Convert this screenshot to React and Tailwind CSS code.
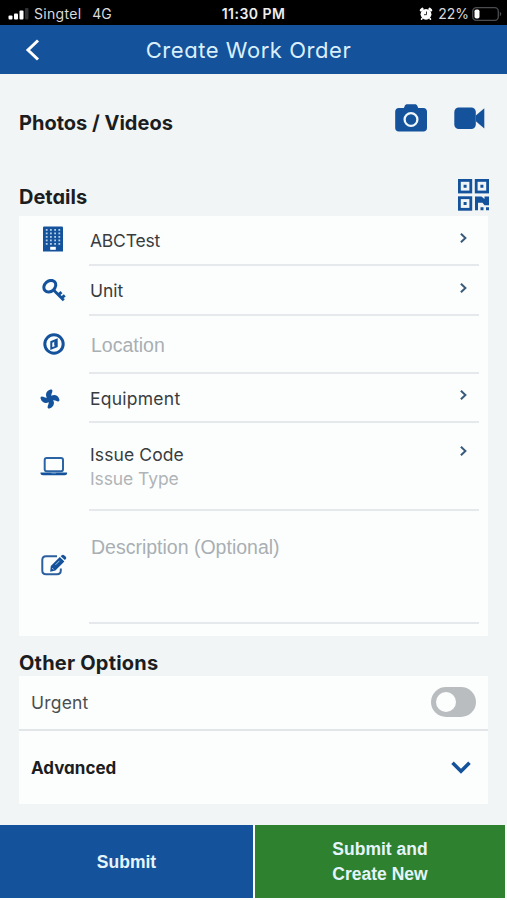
import { useState } from 'react';

const SignalIcon = () => (
  <svg width="22" height="12" viewBox="0 0 22 12" fill="#fff">
    <rect x="0.5" y="7.5" width="4" height="4" rx="1" />
    <rect x="6" y="5.5" width="4" height="6" rx="1" />
    <rect x="11.5" y="2.5" width="4" height="9" rx="1" />
    <rect x="17" y="0" width="3.5" height="11.5" rx="1" fill="#303236" />
  </svg>
);

const AlarmIcon = () => (
  <svg width="14" height="14" viewBox="0 0 14 14">
    <path d="M2 3.200 3.400 2M12 3.200 10.600 2" stroke="#fff" strokeWidth="2.600" strokeLinecap="round" />
    <path d="m3 11.500-.5.700M11 11.500l.5.700" stroke="#fff" strokeWidth="1.600" strokeLinecap="round" />
    <circle cx="7" cy="7.300" r="5.400" fill="#fff" />
    <path d="M7.500 4.500v3.200H5" stroke="#333" strokeWidth="1" fill="none" />
  </svg>
);

const BatteryIcon = () => (
  <svg width="30" height="14" viewBox="0 0 30 14">
    <rect x="0.7" y="0.7" width="25.6" height="12.6" rx="3.6" fill="none" stroke="#4a4c50" strokeWidth="1.3" />
    <rect x="2.5" y="2.5" width="5" height="9" rx="1.8" fill="#fff" />
    <path d="M27.8 4.8c2 .8 2 3.6 0 4.4z" fill="#4a4c50" />
  </svg>
);

const CameraIcon = () => (
  <svg width="32" height="28" viewBox="0 0 32 28">
    <path d="M9.600 2.200C10.200.8 11 .3 12.500.3h7.200c1.400 0 2.200.5 2.800 1.900l.7 1.800h5.200c2.200 0 3.600 1.500 3.600 3.600v16.300c0 2.100-1.400 3.600-3.600 3.600H3.800C1.600 27.500.2 26 .2 23.900V7.600C.2 5.500 1.600 4 3.800 4h5.100z" fill="#14529b" />
    <circle cx="16" cy="15.500" r="6.400" fill="none" stroke="#eef7fa" strokeWidth="2.300" />
  </svg>
);

const VideoIcon = () => (
  <svg width="31" height="23" viewBox="0 0 31 23" fill="#14529b">
    <rect x="0.300" y="0.500" width="21.500" height="21.500" rx="4.500" />
    <path d="M21.800 8.600 30.300 1.200v20.300l-8.500-7.200z" />
  </svg>
);

const QrIcon = () => (
  <svg width="31" height="32" viewBox="0 0 31 32" fill="#14529b">
    <g fill="none" stroke="#14529b" strokeWidth="2.800">
      <rect x="1.400" y="1.400" width="11.400" height="11.600" />
      <rect x="18.200" y="1.400" width="11.400" height="11.600" />
      <rect x="1.400" y="18.700" width="11.400" height="11.600" />
    </g>
    <path d="M5.600 5.700h3v3h-3zM22.400 5.700h3v3h-3zM5.600 23h3v3h-3z" />
    <path d="M17 17.400h6.500l3 2.500v-2.500H31v8.800h-4.500l-2-2.500H20v7.500h-3zM22.500 28.200h3v3h-3zM28 28.200h3v3h-3z" />
  </svg>
);

const windows = [3.7, 7.9, 12.1, 16.3].flatMap((x) => [3, 6.5, 10, 13.5, 17].map((y) => [x, y]));

const BuildingIcon = () => (
  <svg width="20" height="26" viewBox="0 0 20 26">
    <path d="M0 1.500Q0 .5 1 .5h18q1 0 1 1V25.500H0z" fill="#14529b" />
    {windows.map(([x, y]) => (
      <rect key={`${x}-${y}`} x={x - 0.900} y={y} width="1.800" height="1.800" fill="#b4cfe8" />
    ))}
    <rect x="7.200" y="20.800" width="5.600" height="3" fill="#fff" />
  </svg>
);

const KeyIcon = () => (
  <svg width="24" height="24" viewBox="0 0 24 24" fill="none" stroke="#14529b">
    <ellipse cx="7.800" cy="7.200" rx="6.500" ry="5.200" transform="rotate(-42 7.800 7.200)" strokeWidth="3" />
    <path d="m11.800 11.200 10 10M16.300 15.800l3.200-2.700M19.800 18.700l3-2.400" strokeWidth="2.900" />
  </svg>
);

const CompassIcon = () => (
  <svg width="22" height="22" viewBox="0 0 22 22">
    <circle cx="11" cy="11" r="9.200" fill="none" stroke="#14529b" strokeWidth="3" />
    <path d="M8.300 9 13.700 6.800v6.600l-5.400 2.200z" fill="none" stroke="#14529b" strokeWidth="2" />
    <path d="m11.200 9 2.500-2.400v6.800l-2.500-1z" fill="#14529b" />
  </svg>
);

const FanIcon = () => (
  <svg width="20" height="20" viewBox="0 0 20 20" fill="#14529b">
    {[0, 90, 180, 270].map((angle) => (
      <path key={angle} transform={`rotate(${angle} 10 10)`} d="M8.800 11.200C4.600 7.800 5.200 2 10.500.6c1-.2 1.900.2 1.900 1.200 0 1.900-1 2.400-1.100 4.400-.1 1.600.4 2.700-.1 5z" />
    ))}
  </svg>
);

const LaptopIcon = () => (
  <svg width="28" height="19" viewBox="0 0 28 19">
    <rect x="4.700" y="1" width="18.300" height="13.200" rx="2" fill="none" stroke="#2b64a4" strokeWidth="2" />
    <path d="M.5 15.500h26.600v.9q0 1.800-2.500 1.800H3Q.5 18.200.5 16.400z" fill="#14529b" />
    <path d="M11.500 16h4.500" stroke="#8cb1d6" strokeWidth="0.800" />
  </svg>
);

const EditIcon = () => (
  <svg width="26" height="22" viewBox="0 0 26 22">
    <path d="M16 2.200H5Q1.300 2.200 1.300 6v10.500q0 3.700 3.700 3.700h11q3.800 0 3.800-3.700v-2" fill="none" stroke="#2b5f9d" strokeWidth="2" />
    <path d="m9.800 12 9-9 4.600 4.500-9 9-5.200 1.200z" fill="#14529b" />
    <path d="m19.700 2.200 1-1q1.200-1 2.400 0l1.700 1.600q1 1.200 0 2.300l-1 1z" fill="#14529b" />
    <path d="m11.200 14 1.300 1.500M14.500 10.800l4-4" stroke="#b9d3eb" strokeWidth="0.900" />
  </svg>
);

const ChevronRight = () => (
  <svg width="7" height="10" viewBox="0 0 7 10" fill="none" stroke="#3a5b7c" strokeWidth="2">
    <path d="M.9.700 5.400 5 .9 9.300" />
  </svg>
);

const Row = ({ icon, iconClass, className, chevronClass, children }) => (
  <div className="flex">
    <div className={`flex w-[70px] shrink-0 justify-center ${iconClass}`}>{icon}</div>
    <div className={`flex w-[390px] justify-between border-b-2 border-[#e5e9ec] ${className}`}>
      <div className="pl-[1px]">{children}</div>
      {chevronClass && <div className={`mr-[12px] ${chevronClass}`}><ChevronRight /></div>}
    </div>
  </div>
);

const App = () => {
  const [urgent, setUrgent] = useState(false);

  return (
    <div className="flex h-[900px] w-[507px] flex-col overflow-hidden bg-[#f1f5f6] font-['Inter',sans-serif] text-[#1b1d20] [font-feature-settings:'cv11'] whitespace-nowrap">
      {/* Phone status bar */}
      <div className="grid h-[25px] shrink-0 grid-cols-3 items-center bg-black pt-[3px] text-[14px] leading-[20px] text-[#d9dadc] [font-feature-settings:normal]">
        <div className="flex items-center pl-[8px]">
          <SignalIcon />
          <span className="ml-[4px] tracking-[0.3px]">Singtel</span>
          <span className="ml-[11px]">4G</span>
        </div>
        <span className="text-center font-semibold tracking-[0.45px] text-[#ededed]">11:30 PM</span>
        <div className="flex items-center justify-end pr-[5px]">
          <AlarmIcon />
          <span className="mr-[3px] ml-[5px]">22%</span>
          <BatteryIcon />
        </div>
      </div>

      <header className="grid h-[49px] shrink-0 grid-cols-[60px_1fr_70px] items-center bg-[#14529b]">
        <button className="pl-[25px]">
          <svg width="15" height="22" viewBox="0 0 15 22" fill="none" stroke="#fff" strokeWidth="3">
            <path d="M13 1.500 3 11l10 9.500" />
          </svg>
        </button>
        <h1 className="pt-[1px] text-center text-[22px] tracking-[0.55px] text-[#d9effc]">Create Work Order</h1>
      </header>

      <div className="flex h-[95px] shrink-0 items-center justify-between pr-[22px] pl-[19px]">
        <h2 className="pt-[2px] text-[20px] font-bold">Photos / Videos</h2>
        <div className="flex items-center gap-[27px] pb-[7px]">
          <CameraIcon />
          <VideoIcon />
        </div>
      </div>

      <div className="flex h-[47px] shrink-0 justify-between pr-[18px] pl-[19px]">
        <h2 className="pt-[13px] text-[20px] font-bold">Details</h2>
        <div className="pt-[10px]"><QrIcon /></div>
      </div>
      <section className="mx-[19px] h-[420px] shrink-0 bg-[#fcfefe] text-[17.5px] leading-[24px] text-[#393c3f]">
        <Row icon={<BuildingIcon />} iconClass="pt-[10px] pr-[2px]" className="h-[50px] pt-[13px]" chevronClass="pt-[4px]">
          <span className="tracking-[-0.2px]">ABCTest</span>
        </Row>
        <Row icon={<KeyIcon />} iconClass="pt-[13px] pr-[1px]" className="h-[50px] pt-[13px]" chevronClass="pt-[4px]">Unit</Row>
        <Row icon={<CompassIcon />} iconClass="pt-[17px]" className="h-[58px] pt-[17px]">
          <span className="ml-[1px] font-['Liberation_Sans',sans-serif] text-[19.5px] text-[#a9afb3]">Location</span>
        </Row>
        <Row icon={<FanIcon />} iconClass="pt-[15px] pr-[8px]" className="h-[49px] pt-[13px]" chevronClass="pt-[3px]">
          <span className="tracking-[0.25px]">Equipment</span>
        </Row>
        <Row icon={<LaptopIcon />} iconClass="pt-[34px]" className="h-[88px] pt-[20px]" chevronClass="pt-[3px]">
          <div className="tracking-[0.1px]">Issue Code</div>
          <div className="tracking-[-0.1px] text-[#b0b4b7]">Issue Type</div>
        </Row>
        <Row icon={<EditIcon />} iconClass="pt-[43px]" className="h-[113px] pt-[24px]">
          <span className="ml-[1px] font-['Liberation_Sans',sans-serif] text-[19.5px] text-[#a9afb3]">Description (Optional)</span>
        </Row>
      </section>

      <h2 className="h-[40px] shrink-0 pt-[12px] pl-[19px] text-[20px] font-bold tracking-[0.2px]">Other Options</h2>
      <section className="mx-[19px] shrink-0 bg-[#fcfefe]">
        <div className="flex h-[55px] items-center justify-between border-b-2 border-[#e3e6e9] pr-[12px] pl-[12px]">
          <span className="pt-[1px] text-[17.5px] tracking-[0.2px] text-[#4b4e51]">Urgent</span>
          <button
            onClick={() => setUrgent(!urgent)}
            className={`-mt-[1px] flex h-[30px] w-[45px] items-center rounded-full px-[5px] ${urgent ? 'justify-end bg-[#14529b]' : 'bg-[#babdbf]'}`}
          >
            <span className="size-[20px] rounded-full bg-[#fcfefe]" />
          </button>
        </div>
        <div className="flex h-[73px] items-center justify-between pr-[17px] pl-[12px]">
          <span className="pt-[2px] text-[17px] font-bold">Advanced</span>
          <svg width="20" height="13" viewBox="0 0 20 13" fill="none" stroke="#14529b" strokeWidth="3.600">
            <path d="m1.500 1.800 8.500 8.400 8.500-8.400" />
          </svg>
        </div>
      </section>

      {/* Footer actions */}
      <div className="mt-auto flex h-[75px] shrink-0 gap-[2px] border-b-2 border-[#fafcfd] bg-[#fafcfd] font-['Liberation_Sans',sans-serif] text-[17.5px] leading-[25px] font-bold text-[#e4f4fb]">
        <button className="w-[253px] bg-[#14529b] pt-[1px]">Submit</button>
        <button className="w-[250px] bg-[#2d812f]">
          Submit and<br />Create New
        </button>
      </div>
    </div>
  );
};

export default App;
